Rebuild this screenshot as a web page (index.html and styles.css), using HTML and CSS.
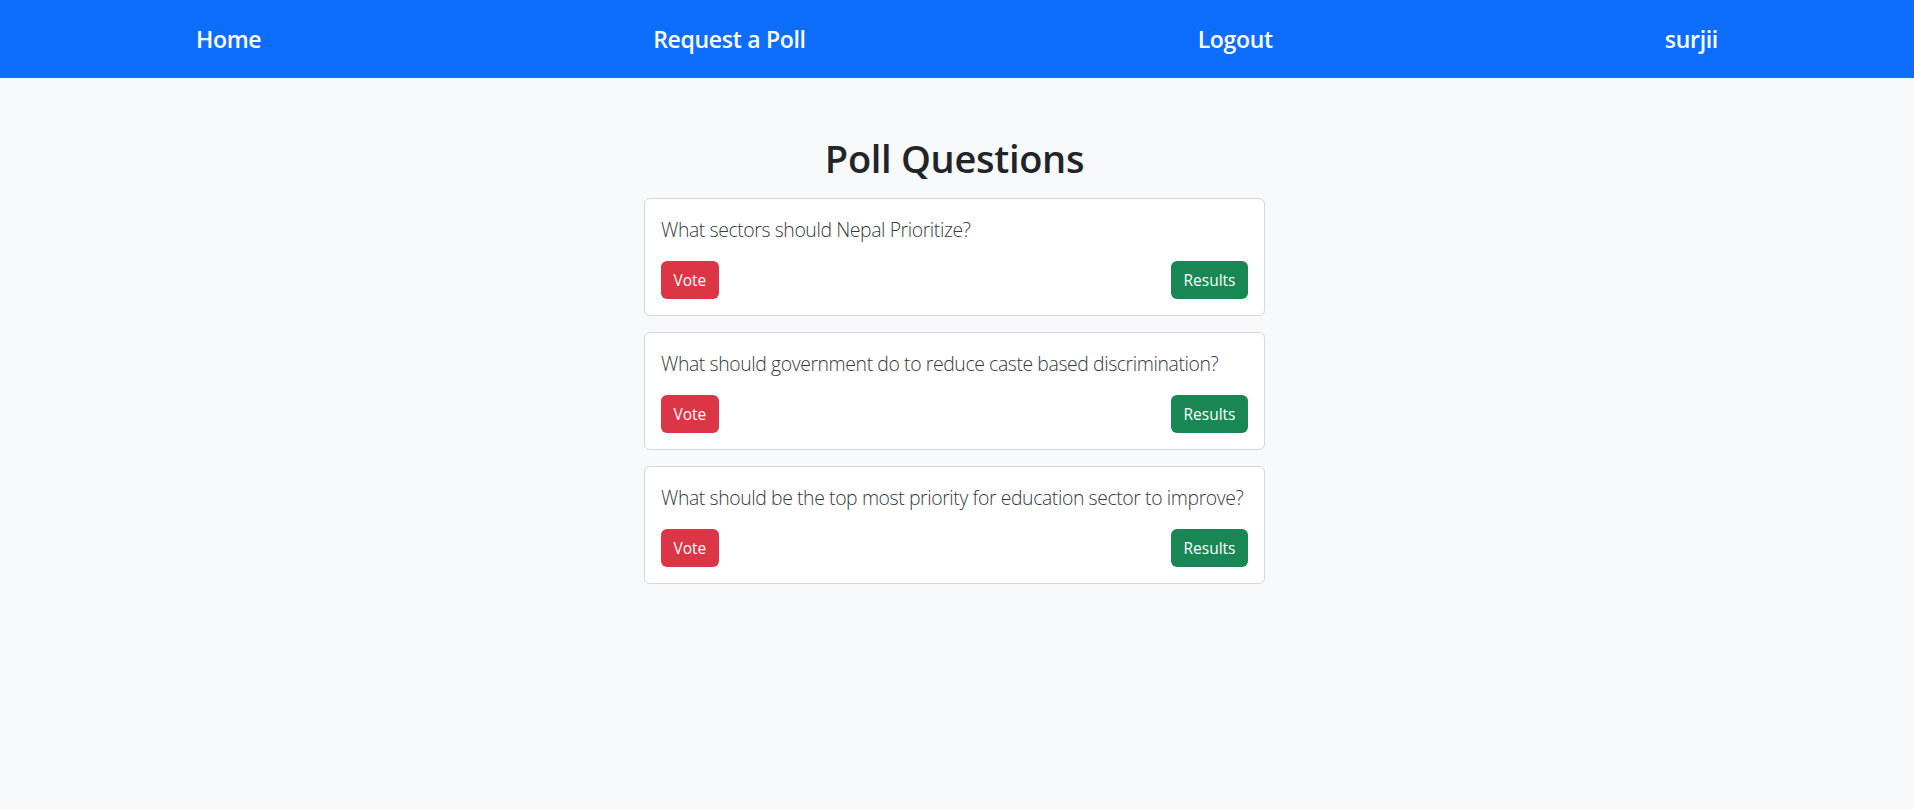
FILE: index.html
```html
<!DOCTYPE html>
<html lang="en">
<head>
<meta charset="utf-8">
<title>Poll Questions</title>
<link rel="stylesheet" href="styles.css">
</head>
<body>
<nav class="navbar">
  <a class="nav-link" href="#">Home</a>
  <a class="nav-link" href="#">Request a Poll</a>
  <a class="nav-link" href="#">Logout</a>
  <a class="nav-link" href="#">surjii</a>
</nav>
<main class="content">
  <h1 class="title">Poll Questions</h1>
  <div class="poll-list">
    <div class="card">
      <p class="question">What sectors should Nepal Prioritize?</p>
      <div class="actions">
        <a class="btn btn-danger" href="#">Vote</a>
        <a class="btn btn-success" href="#">Results</a>
      </div>
    </div>
    <div class="card">
      <p class="question">What should government do to reduce caste based discrimination?</p>
      <div class="actions">
        <a class="btn btn-danger" href="#">Vote</a>
        <a class="btn btn-success" href="#">Results</a>
      </div>
    </div>
    <div class="card">
      <p class="question">What should be the top most priority for education sector to improve?</p>
      <div class="actions">
        <a class="btn btn-danger" href="#">Vote</a>
        <a class="btn btn-success" href="#">Results</a>
      </div>
    </div>
  </div>
</main>
</body>
</html>
```
FILE: styles.css
```css
* { box-sizing: border-box; }
html, body {
  margin: 0;
  padding: 0;
  background: #f8f9fa;
  color: #212529;
  font-family: "Open Sans", "Noto Sans", "Liberation Sans", sans-serif;
}
.navbar {
  height: 78px;
  background: #0d6efd;
  display: flex;
  align-items: center;
  justify-content: space-around;
}
.nav-link {
  color: #fff;
  text-decoration: none;
  font-size: 23px;
  font-weight: 600;
  letter-spacing: -0.3px;
}
.content {
  width: 621px;
  margin-left: calc(50% - 313px);
  padding-top: 58px;
}
.title {
  margin: 0 0 16px;
  text-align: center;
  font-size: 38px;
  font-weight: 600;
  line-height: 1.2;
  letter-spacing: -0.3px;
}
.poll-list {
  display: flex;
  flex-direction: column;
  gap: 16px;
}
.card {
  background: #fff;
  border: 1px solid #d5d7d9;
  border-radius: 6px;
  padding: 16px;
}
.question {
  margin: 0 0 16px;
  font-size: 19.4px;
  font-weight: 300;
  line-height: 30px;
  color: #343a40;
  letter-spacing: -0.4px;
}
.actions {
  display: flex;
  justify-content: space-between;
}
.btn {
  display: inline-block;
  height: 38px;
  line-height: 38px;
  padding: 0 12.5px;
  border-radius: 6px;
  color: #fff;
  text-decoration: none;
  font-size: 15.5px;
}
.btn-danger { background: #dc3545; }
.btn-success { background: #198754; }
```
